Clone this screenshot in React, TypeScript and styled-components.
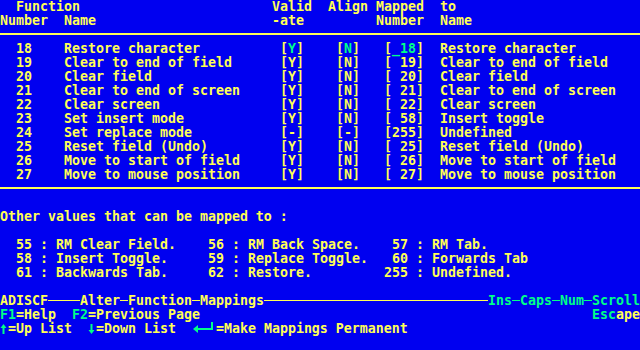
import React from 'react';
import styled, { createGlobalStyle } from 'styled-components';

const BLUE = '#0000f0';
const YELLOW = '#ffff55';
const GREEN = '#00ff88';
const CELL = 8;

const GlobalStyle = createGlobalStyle`
  html, body {
    margin: 0;
    padding: 0;
    background: ${BLUE};
  }
`;

const Screen = styled.div`
  width: 640px;
  height: 350px;
  overflow: hidden;
  background: ${BLUE};
  color: ${YELLOW};
  font-family: 'DejaVu Sans Mono', 'Liberation Mono', monospace;
  font-weight: bold;
  font-size: 13.29px;
  line-height: 14px;
  display: flex;
  flex-direction: column;
`;

const TableRow = styled.div`
  display: grid;
  grid-template-columns: 64px 208px 56px 48px 64px 1fr;
  height: 14px;
`;

const Cell = styled.span<{ $indent?: number }>`
  white-space: pre;
  overflow: visible;
  padding-left: ${(p) => (p.$indent || 0) * CELL}px;
`;

const Hi = styled.span`
  color: ${GREEN};
`;

const Divider = styled.div`
  height: 14px;
  display: flex;
  flex-direction: column;

  &::before {
    content: '';
    margin-top: 5px;
    height: 2px;
    background: ${YELLOW};
  }
`;

const Line = styled.div`
  height: 14px;
  white-space: pre;
`;

const ValuesRow = styled.div`
  display: grid;
  grid-template-columns: 192px 184px 1fr;
  padding-left: ${CELL}px;
  height: 14px;
`;

const Entry = styled.span`
  display: flex;
  white-space: pre;
`;

const EntryNum = styled.span`
  width: ${3 * CELL}px;
  text-align: right;
`;

const StatusRow = styled.div`
  display: flex;
  height: 14px;
  white-space: pre;
`;

const Rule = styled.span<{ $chars?: number; $green?: boolean }>`
  height: 1px;
  margin-top: 6px;
  background: ${(p) => (p.$green ? GREEN : YELLOW)};
  ${(p) => (p.$chars ? `width: ${p.$chars * CELL}px;` : 'flex: 1;')}
`;

const Fill = styled.span`
  flex: 1;
`;

const Key = styled.span`
  color: ${GREEN};
`;

const Glyph = styled.svg<{ $chars: number }>`
  width: ${(p) => p.$chars * CELL}px;
  height: 14px;
  display: block;
  flex-shrink: 0;
`;

interface Mapping {
  num: number;
  name: string;
  valid: string;
  align: string;
  target: string;
  targetName: string;
}

const mappings: Mapping[] = [
  { num: 18, name: 'Restore character', valid: 'Y', align: 'N', target: '_18', targetName: 'Restore character' },
  { num: 19, name: 'Clear to end of field', valid: 'Y', align: 'N', target: ' 19', targetName: 'Clear to end of field' },
  { num: 20, name: 'Clear field', valid: 'Y', align: 'N', target: ' 20', targetName: 'Clear field' },
  { num: 21, name: 'Clear to end of screen', valid: 'Y', align: 'N', target: ' 21', targetName: 'Clear to end of screen' },
  { num: 22, name: 'Clear screen', valid: 'Y', align: 'N', target: ' 22', targetName: 'Clear screen' },
  { num: 23, name: 'Set insert mode', valid: 'Y', align: 'N', target: ' 58', targetName: 'Insert toggle' },
  { num: 24, name: 'Set replace mode', valid: '-', align: '-', target: '255', targetName: 'Undefined' },
  { num: 25, name: 'Reset field (Undo)', valid: 'Y', align: 'N', target: ' 25', targetName: 'Reset field (Undo)' },
  { num: 26, name: 'Move to start of field', valid: 'Y', align: 'N', target: ' 26', targetName: 'Move to start of field' },
  { num: 27, name: 'Move to mouse position', valid: 'Y', align: 'N', target: ' 27', targetName: 'Move to mouse position' },
];

const otherValues: [number, string][][] = [
  [[55, 'RM Clear Field.'], [56, 'RM Back Space.'], [57, 'RM Tab.']],
  [[58, 'Insert Toggle.'], [59, 'Replace Toggle.'], [60, 'Forwards Tab']],
  [[61, 'Backwards Tab.'], [62, 'Restore.'], [255, 'Undefined.']],
];

const Bracket: React.FC<{ value: string; active: boolean }> = ({ value, active }) => (
  <>
    [{active ? <Hi>{value}</Hi> : value}]
  </>
);

// text-mode arrow glyphs
const UpArrow = () => (
  <Glyph $chars={1} viewBox="0 0 8 14">
    <polygon points="3.5,2 0.5,6 6.5,6" fill={GREEN} />
    <rect x="2.5" y="5" width="2" height="7" fill={GREEN} />
  </Glyph>
);

const DownArrow = () => (
  <Glyph $chars={1} viewBox="0 0 8 14">
    <rect x="2.5" y="2" width="2" height="7" fill={GREEN} />
    <polygon points="3.5,12 0.5,8 6.5,8" fill={GREEN} />
  </Glyph>
);

const EnterArrow = () => (
  <Glyph $chars={3} viewBox="0 0 24 14">
    <polygon points="1,7 6,3 6,11" fill={GREEN} />
    <rect x="6" y="6" width="15" height="2" fill={GREEN} />
    <rect x="19" y="0" width="2" height="8" fill={GREEN} />
  </Glyph>
);

const App: React.FC = () => {
  return (
    <Screen>
      <GlobalStyle />
      <TableRow>
        <Cell $indent={2}>Function</Cell>
        <Cell />
        <Cell>Valid</Cell>
        <Cell>Align</Cell>
        <Cell>Mapped</Cell>
        <Cell>to</Cell>
      </TableRow>
      <TableRow>
        <Cell>Number</Cell>
        <Cell>Name</Cell>
        <Cell>-ate</Cell>
        <Cell />
        <Cell>Number</Cell>
        <Cell>Name</Cell>
      </TableRow>
      <Divider />
      {mappings.map((m, i) => (
        <TableRow key={m.num}>
          <Cell $indent={2}>{m.num}</Cell>
          <Cell>{m.name}</Cell>
          <Cell $indent={1}>
            <Bracket value={m.valid} active={i === 0} />
          </Cell>
          <Cell $indent={1}>
            <Bracket value={m.align} active={i === 0} />
          </Cell>
          <Cell $indent={1}>
            <Bracket value={m.target} active={i === 0} />
          </Cell>
          <Cell>{m.targetName}</Cell>
        </TableRow>
      ))}
      <Divider />
      <Line />
      <Line>Other values that can be mapped to :</Line>
      <Line />
      {otherValues.map((row, r) => (
        <ValuesRow key={r}>
          {row.map(([n, label]) => (
            <Entry key={n}>
              <EntryNum>{n}</EntryNum>
              {' : '}
              {label}
            </Entry>
          ))}
        </ValuesRow>
      ))}
      <Line />
      <StatusRow>
        ADISCF
        <Rule $chars={4} />
        Alter
        <Rule $chars={1} />
        Function
        <Rule $chars={1} />
        Mappings
        <Rule />
        <Key>Ins</Key>
        <Rule $chars={1} $green />
        <Key>Caps</Key>
        <Rule $chars={1} $green />
        <Key>Num</Key>
        <Rule $chars={1} $green />
        <Key>Scroll</Key>
      </StatusRow>
      <StatusRow>
        <Key>F1</Key>
        {'=Help  '}
        <Key>F2</Key>
        {'=Previous Page'}
        <Fill />
        <Key>Esc</Key>
        {'ape'}
      </StatusRow>
      <StatusRow>
        <UpArrow />
        {'=Up List  '}
        <DownArrow />
        {'=Down List  '}
        <EnterArrow />
        {'=Make Mappings Permanent'}
      </StatusRow>
    </Screen>
  );
};

export default App;
